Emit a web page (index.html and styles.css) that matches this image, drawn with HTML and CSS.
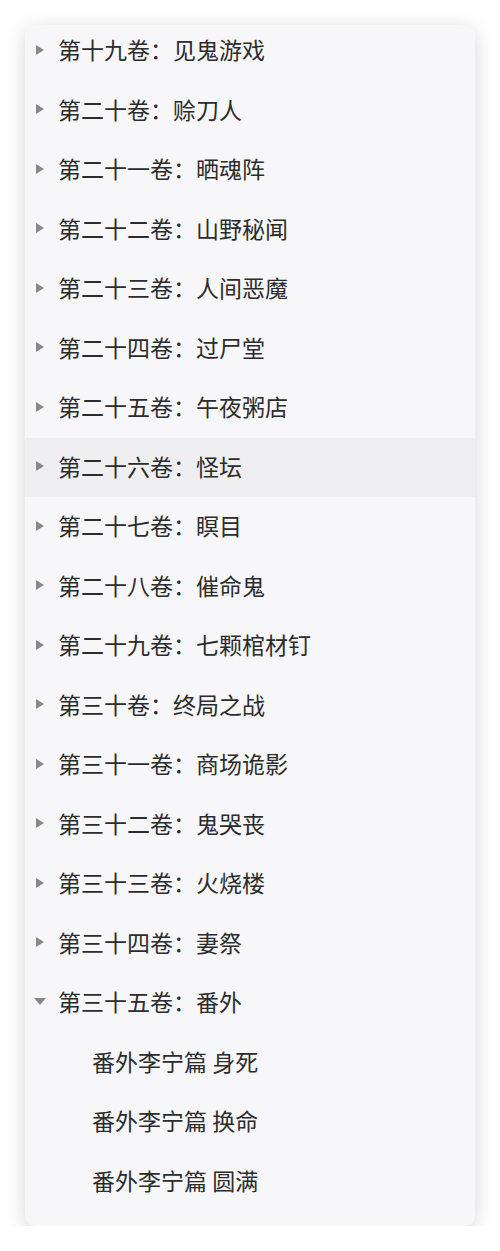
FILE: index.html
```html
<!DOCTYPE html>
<html lang="zh-CN">
<head>
<meta charset="utf-8">
<title>目录</title>
<link rel="stylesheet" href="styles.css">
</head>
<body>
<div class="card">
  <ul class="tree">
    <li class="node"><span class="arrow"></span><span class="label">第十九卷<span class="colon">：</span>见鬼游戏</span></li>
    <li class="node"><span class="arrow"></span><span class="label">第二十卷<span class="colon">：</span>赊刀人</span></li>
    <li class="node"><span class="arrow"></span><span class="label">第二十一卷<span class="colon">：</span>晒魂阵</span></li>
    <li class="node"><span class="arrow"></span><span class="label">第二十二卷<span class="colon">：</span>山野秘闻</span></li>
    <li class="node"><span class="arrow"></span><span class="label">第二十三卷<span class="colon">：</span>人间恶魔</span></li>
    <li class="node"><span class="arrow"></span><span class="label">第二十四卷<span class="colon">：</span>过尸堂</span></li>
    <li class="node"><span class="arrow"></span><span class="label">第二十五卷<span class="colon">：</span>午夜粥店</span></li>
    <li class="node hover"><span class="arrow"></span><span class="label">第二十六卷<span class="colon">：</span>怪坛</span></li>
    <li class="node"><span class="arrow"></span><span class="label">第二十七卷<span class="colon">：</span>瞑目</span></li>
    <li class="node"><span class="arrow"></span><span class="label">第二十八卷<span class="colon">：</span>催命鬼</span></li>
    <li class="node"><span class="arrow"></span><span class="label">第二十九卷<span class="colon">：</span>七颗棺材钉</span></li>
    <li class="node"><span class="arrow"></span><span class="label">第三十卷<span class="colon">：</span>终局之战</span></li>
    <li class="node"><span class="arrow"></span><span class="label">第三十一卷<span class="colon">：</span>商场诡影</span></li>
    <li class="node"><span class="arrow"></span><span class="label">第三十二卷<span class="colon">：</span>鬼哭丧</span></li>
    <li class="node"><span class="arrow"></span><span class="label">第三十三卷<span class="colon">：</span>火烧楼</span></li>
    <li class="node"><span class="arrow"></span><span class="label">第三十四卷<span class="colon">：</span>妻祭</span></li>
    <li class="node open"><span class="arrow"></span><span class="label">第三十五卷<span class="colon">：</span>番外</span></li>
    <li class="node leaf"><span class="label">番外李宁篇 身死</span></li>
    <li class="node leaf"><span class="label">番外李宁篇 换命</span></li>
    <li class="node leaf"><span class="label">番外李宁篇 圆满</span></li>
  </ul>
</div>
</body>
</html>
```

FILE: styles.css
```css
html, body {
  margin: 0;
  padding: 0;
  background: #ffffff;
}
body {
  padding: 25px 25px 0 25px;
  font-family: "Noto Sans CJK SC", "Noto Sans", sans-serif;
}
.card {
  width: 450px;
  height: 1201px;
  box-sizing: border-box;
  background: #f7f7f9;
  border-radius: 10px;
  box-shadow: 0 4px 20px rgba(0, 0, 0, 0.17);
  overflow: hidden;
}
.tree {
  list-style: none;
  margin: -4px 0 0 0;
  padding: 0;
}
.node {
  height: 59.5px;
  display: flex;
  align-items: center;
  padding-left: 11px;
  color: #2c2c2c;
  font-size: 23px;
  line-height: 1;
}
.node .label {
  position: relative;
  top: -1px;
  white-space: nowrap;
}
.colon {
  font-family: "Noto Sans CJK TC", "Noto Sans CJK SC", sans-serif;
}
.node.hover {
  background: #efeff2;
}
.arrow {
  flex: none;
  width: 0;
  height: 0;
  border-top: 5.5px solid transparent;
  border-bottom: 5.5px solid transparent;
  border-left: 8px solid #888888;
  margin-right: 14px;
  position: relative;
  top: -1px;
}
.node.open .arrow {
  border-left: 6px solid transparent;
  border-right: 6px solid transparent;
  border-top: 7px solid #888888;
  border-bottom: 0;
  margin-left: -2px;
  margin-right: 12px;
  top: -1px;
}
.node.leaf {
  padding-left: 67px;
}
```
